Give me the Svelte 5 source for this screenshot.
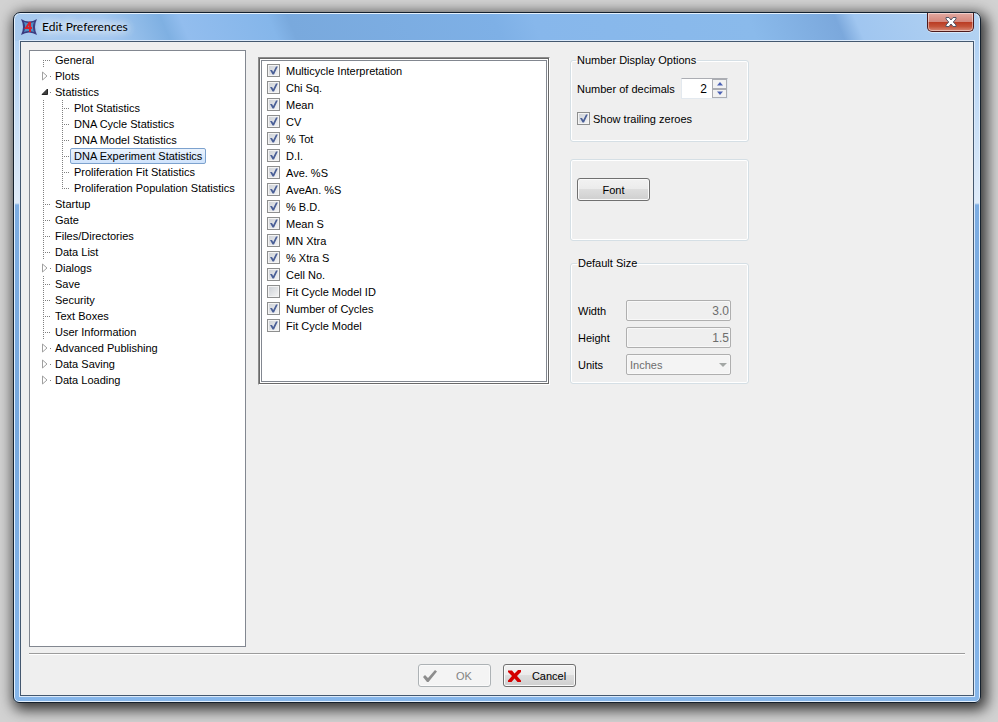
<script>
  let topics = $state([
    { name: 'General' },
    { name: 'Plots', children: [] },
    {
      name: 'Statistics',
      open: true,
      children: [
        'Plot Statistics',
        'DNA Cycle Statistics',
        'DNA Model Statistics',
        'DNA Experiment Statistics',
        'Proliferation Fit Statistics',
        'Proliferation Population Statistics'
      ]
    },
    { name: 'Startup' },
    { name: 'Gate' },
    { name: 'Files/Directories' },
    { name: 'Data List' },
    { name: 'Dialogs', children: [] },
    { name: 'Save' },
    { name: 'Security' },
    { name: 'Text Boxes' },
    { name: 'User Information' },
    { name: 'Advanced Publishing', children: [] },
    { name: 'Data Saving', children: [] },
    { name: 'Data Loading', children: [] }
  ]);

  let selected = $state('DNA Experiment Statistics');

  let statistics = $state([
    { name: 'Multicycle Interpretation', checked: true },
    { name: 'Chi Sq.', checked: true },
    { name: 'Mean', checked: true },
    { name: 'CV', checked: true },
    { name: '% Tot', checked: true },
    { name: 'D.I.', checked: true },
    { name: 'Ave. %S', checked: true },
    { name: 'AveAn. %S', checked: true },
    { name: '% B.D.', checked: true },
    { name: 'Mean S', checked: true },
    { name: 'MN Xtra', checked: true },
    { name: '% Xtra S', checked: true },
    { name: 'Cell No.', checked: true },
    { name: 'Fit Cycle Model ID', checked: false },
    { name: 'Number of Cycles', checked: true },
    { name: 'Fit Cycle Model', checked: true }
  ]);

  let decimals = $state(2);
  let trailingZeroes = $state({ name: 'Show trailing zeroes', checked: true });
</script>

{#snippet check(item)}
  <label class="check">
    <span class="box">
      <input type="checkbox" bind:checked={item.checked} />
      <svg viewBox="0 0 13 13" aria-hidden="true">
        <path d="M3 6 L5 6 L6.2 8 L9 2.5 L10.8 2.5 L7 10.5 L5.5 10.5 Z" fill="#4a5f97" />
      </svg>
    </span>
    {item.name}
  </label>
{/snippet}

<div class="desktop">
  <div class="window" role="dialog" aria-labelledby="window-title">
    <header class="titlebar">
      <svg class="app-icon" viewBox="0 0 16 16" aria-hidden="true">
        <path d="M0 0 Q8 5 16 0 Q12 8 16 16 Q8 11 0 16 Q4 8 0 0Z" fill="#3a3a80" />
        <path d="M3 3 Q8 5 13 3 Q11 8 13 13 Q8 11 3 13 Q5 8 3 3Z" fill="#4f8fc4" />
        <path d="M9 3 L5 9 H11 M9 3 V13" fill="none" stroke="#d8202a" stroke-width="2" />
      </svg>
      <h1 id="window-title">Edit Preferences</h1>
      <button class="close" aria-label="Close">
        <svg viewBox="0 0 12 10" aria-hidden="true">
          <path
            d="M1 .5 H4 L6 3 L8 .5 H11 V2 L8.3 5 L11 8 V9.5 H8 L6 7 L4 9.5 H1 V8 L3.7 5 L1 2Z"
            fill="#fff"
            stroke="#535666"
          />
        </svg>
      </button>
    </header>

    <main class="client">
      <div class="panes">
        <ul class="tree" role="tree">
          {#each topics as topic}
            <li role="none">
              <div class="row" class:leaf={!topic.children}>
                <span class="gutter">
                  {#if topic.children}
                    <button
                      class="expander"
                      aria-label="Toggle {topic.name}"
                      onclick={() => (topic.open = !topic.open)}
                    >
                      <svg viewBox="0 0 8 10" aria-hidden="true">
                        {#if topic.open}
                          <path d="M6.5 2 V7.5 H1 Z" fill="#404040" stroke="#262626" />
                        {:else}
                          <path d="M1.5 1 L6 5 L1.5 9 Z" fill="#fff" stroke="#a0a0a0" />
                        {/if}
                      </svg>
                    </button>
                  {/if}
                </span>
                <button
                  class="item"
                  class:selected={selected === topic.name}
                  role="treeitem"
                  aria-selected={selected === topic.name}
                  onclick={() => (selected = topic.name)}>{topic.name}</button
                >
              </div>
              {#if topic.open}
                <ul class="branch" role="group">
                  {#each topic.children as child}
                    <li class="row leaf" role="none">
                      <span class="gutter"></span>
                      <button
                        class="item"
                        class:selected={selected === child}
                        role="treeitem"
                        aria-selected={selected === child}
                        onclick={() => (selected = child)}>{child}</button
                      >
                    </li>
                  {/each}
                </ul>
              {/if}
            </li>
          {/each}
        </ul>

        <div class="list-frame">
          <div class="list">
            {#each statistics as item}
              {@render check(item)}
            {/each}
          </div>
        </div>

        <div class="options">
          <fieldset class="numbers">
            <legend>Number Display Options</legend>
            <div class="decimals">
              <label for="decimals">Number of decimals</label>
              <span class="spinner">
                <input id="decimals" type="text" bind:value={decimals} />
                <span class="arrows">
                  <button aria-label="Increase" onclick={() => decimals++}>
                    <svg viewBox="0 0 6 4" aria-hidden="true"><path d="M3 0 L6 3.5 H0Z" /></svg>
                  </button>
                  <button aria-label="Decrease" onclick={() => (decimals = Math.max(0, decimals - 1))}>
                    <svg viewBox="0 0 6 4" aria-hidden="true"><path d="M0 0.5 H6 L3 4Z" /></svg>
                  </button>
                </span>
              </span>
            </div>
            {@render check(trailingZeroes)}
          </fieldset>

          <fieldset class="font">
            <button class="push">Font</button>
          </fieldset>

          <fieldset class="size">
            <legend>Default Size</legend>
            <label for="width">Width</label>
            <input id="width" type="text" value="3.0" disabled />
            <label for="height">Height</label>
            <input id="height" type="text" value="1.5" disabled />
            <label for="units">Units</label>
            <span class="dropdown">
              <select id="units" disabled>
                <option>Inches</option>
              </select>
              <svg viewBox="0 0 8 4" aria-hidden="true"><path d="M0 0 H8 L4 4Z" fill="#a3a7a5" /></svg>
            </span>
          </fieldset>
        </div>
      </div>

      <footer class="actions">
        <button class="push" disabled>
          <svg viewBox="0 0 16 14" aria-hidden="true">
            <path d="M1 8 L3 6 L6 9 L13 1 L15 2.5 L6.5 13 H5 Z" fill="#8d8d8d" />
          </svg>
          <span>OK</span>
        </button>
        <button class="push">
          <svg viewBox="0 0 16 14" aria-hidden="true">
            <path d="M1 1.5 H5 L7.5 4.5 L11 1 H14 V3 L10 7 L14 11.5 V13 H10.5 L7.5 9.5 L4.5 13 H1 V11.5 L5 7 L1 3Z" fill="#d40000" />
          </svg>
          <span>Cancel</span>
        </button>
      </footer>
    </main>
  </div>
</div>

<style>
  :global(body) {
    margin: 0;
    background: #d2d2d2;
  }

  .desktop {
    box-sizing: border-box;
    display: flex;
    min-height: 100vh;
    padding: 12px 17px 19px 13px;
    font-family: 'Liberation Sans', Arial, sans-serif;
    font-size: 11px;
    line-height: 16px;
    color: #000;
  }

  button,
  input,
  select {
    box-sizing: border-box;
    margin: 0;
    font: inherit;
    color: inherit;
  }

  /* glass frame: slanted streaks across the title bar, pale upper sides, blue below */
  .window {
    box-sizing: border-box;
    flex: 1;
    display: flex;
    flex-direction: column;
    padding: 0 6px 6px;
    border: 1px solid #15212e;
    border-radius: 7px 7px 6px 6px;
    background:
      linear-gradient(
        67deg,
        #a9cbef,
        #a3c8f0 10%,
        #7fb0e2 16%,
        #92bdee 18%,
        #85b6ea 27%,
        #79a9dd 29%,
        #7eb0e6 50%,
        #87b7eb 54%,
        #8abaeb 76%,
        #7ba8dc 85%,
        #a0c6f0 87%,
        #b4d3f2
      ) 0 0 / 100% 28px no-repeat,
      linear-gradient(#a9cdf3, #dfebf8 190px, #7dade2 192px, #76a8de 60%, #86b6ea);
    box-shadow:
      inset 0 0 0 1px #e4f0fc,
      3px 4px 14px 3px rgba(0, 0, 0, 0.75);
  }

  .titlebar {
    display: flex;
    align-items: flex-start;
    height: 28px;
    padding-left: 1px;
  }

  .app-icon {
    width: 16px;
    height: 16px;
    margin-top: 6px;
  }

  h1 {
    flex: 1;
    margin: 5px 0 0 5px;
    font: 12px/18px Lato, 'Noto Sans', sans-serif;
    text-shadow: 0 0 8px #fff, 0 0 10px #fff, 0 0 12px #fff;
  }

  .close {
    display: flex;
    align-items: center;
    justify-content: center;
    width: 47px;
    height: 19px;
    padding: 0;
    border: 1px solid #4d1a1c;
    border-top: 0;
    border-radius: 0 0 5px 5px;
    background: linear-gradient(#e3aaa2, #d4877c 48%, #b93a22 50%, #c4543a 75%, #d98c7a);
    box-shadow: inset 0 0 0 1px rgba(255, 255, 255, 0.45), 0 1px 0 #d8e8f8;
  }

  .close svg {
    width: 12px;
    height: 10px;
  }

  .client {
    flex: 1;
    display: flex;
    flex-direction: column;
    padding: 8px 8px 0;
    border: 1px solid #44586f;
    outline: 1px solid #dceafa;
    background: #efefef;
  }

  .panes {
    flex: 1;
    display: flex;
    align-items: flex-start;
    padding-bottom: 6px;
    border-bottom: 1px solid #9c9c9c;
    box-shadow: 0 1px 0 #fff;
  }

  .tree {
    box-sizing: border-box;
    align-self: stretch;
    flex: 0 0 217px;
    margin: 0;
    padding: 1px 0 0;
    border: 1px solid #828790;
    background: #fff;
    list-style: none;
  }

  .row {
    display: flex;
    height: 16px;
  }

  /* dotted connectors: one vertical run and one stub towards the label */
  .gutter {
    flex: 0 0 21px;
    display: flex;
    align-items: center;
    padding-left: 11px;
    box-sizing: border-box;
    background: linear-gradient(#808080, #808080) 20px 8px / 1px 1px no-repeat;
  }

  .leaf .gutter {
    background:
      repeating-linear-gradient(#808080 0 1px, transparent 1px 2px) 13px 0 / 1px 16px no-repeat,
      repeating-linear-gradient(to right, #808080 0 1px, transparent 1px 2px) 13px 8px / 8px 1px no-repeat;
  }

  .tree > li:first-child .gutter {
    background-position: 13px 8px;
  }

  .branch {
    margin: 0;
    padding: 0 0 0 19px;
    list-style: none;
    background: repeating-linear-gradient(#808080 0 1px, transparent 1px 2px) 13px 0 / 1px 100% no-repeat;
  }

  .branch .row:last-child .gutter {
    background-size: 1px 9px, 8px 1px;
  }

  .expander {
    display: flex;
    padding: 0;
    border: 0;
    background: none;
  }

  .expander svg {
    width: 8px;
    height: 10px;
  }

  .item {
    padding: 0 3px;
    border: 1px solid transparent;
    border-radius: 2px;
    background: none;
    line-height: 14px;
    white-space: nowrap;
  }

  .item.selected {
    border-color: #7da2ce;
    background: linear-gradient(#ebf3fd, #cfe3fc);
  }

  .list-frame {
    flex: 0 0 288px;
    margin: 7px 20px 0 12px;
    border: 1px solid;
    border-color: #8c8c8c #fff #fff #8c8c8c;
    padding: 1px;
    background: #696969;
  }

  .list {
    min-height: 318px;
    padding: 2px 5px;
    border: 1px solid #fff;
    outline: 1px solid #828790;
    outline-offset: -2px;
    background: #fff;
  }

  .check {
    display: flex;
    align-items: center;
    gap: 6px;
    height: 17px;
  }

  .list .check {
    margin-left: 1px;
  }

  .box {
    display: grid;
  }

  .box input {
    grid-area: 1 / 1;
    width: 13px;
    height: 13px;
    appearance: none;
    border: 1px solid #8e8f8f;
    background: linear-gradient(135deg, #cbcfd5, #f6f6f6);
    box-shadow: inset 0 0 0 1px #f4f4f4;
  }

  .box svg {
    grid-area: 1 / 1;
    width: 13px;
    height: 13px;
    visibility: hidden;
    pointer-events: none;
  }

  .box input:checked + svg {
    visibility: visible;
  }

  .options {
    flex: 0 0 179px;
    margin-top: 2px;
  }

  fieldset {
    box-sizing: border-box;
    min-width: 0;
    margin: 0;
    padding: 0 6px;
    border: 1px solid #d5dfe5;
    border-radius: 3px;
    box-shadow: inset 0 0 0 1px #fff;
  }

  legend {
    padding: 0 1px;
    margin-left: -1px;
  }

  .numbers {
    height: 90px;
  }

  .decimals {
    display: flex;
    align-items: center;
    justify-content: space-between;
    margin: 10px 14px 11px 0;
  }

  .numbers .check {
    gap: 3px;
  }

  .spinner {
    display: flex;
    width: 47px;
    height: 21px;
    box-sizing: border-box;
    border: 1px solid #e3e9ef;
    border-top-color: #abadb3;
    background: #fff;
  }

  .spinner input {
    flex: 1;
    min-width: 0;
    padding: 0 5px 0 0;
    border: 0;
    background: none;
    font-size: 12px;
    text-align: right;
  }

  .arrows {
    display: flex;
    flex-direction: column;
  }

  .arrows button {
    flex: 1;
    display: flex;
    align-items: center;
    justify-content: center;
    width: 15px;
    padding: 0;
    border: 1px solid #abadb3;
    background: #f2f2f2;
  }

  .arrows svg {
    width: 6px;
    height: 4px;
    fill: #4c62b5;
  }

  .font {
    height: 82px;
    margin-top: 17px;
    padding-top: 18px;
  }

  .push {
    display: flex;
    align-items: center;
    justify-content: center;
    width: 73px;
    height: 23px;
    padding: 0;
    border: 1px solid #707070;
    border-radius: 3px;
    background: linear-gradient(#f2f2f2, #ebebeb 49%, #dddddd 50%, #cfcfcf);
    box-shadow: inset 0 0 0 1px #fafafa;
  }

  .push:disabled {
    border-color: #adb2b5;
    background: #f4f4f4;
    color: #838383;
  }

  .size {
    display: grid;
    grid-template-columns: 48px 105px;
    grid-auto-rows: 21px;
    gap: 6px 0;
    align-items: center;
    margin-top: 14px;
    padding: 29px 7px 8px;
  }

  .size input,
  .size select {
    width: 100%;
    height: 21px;
    padding: 0 2px;
    border: 1px solid #afafaf;
    border-radius: 2px;
    background: #efefef;
    box-shadow: inset 0 0 0 1px #f8f8f8;
    color: #6d6d6d;
    opacity: 1;
  }

  .size input {
    padding-right: 1px;
    font-size: 12px;
    text-align: right;
  }

  .dropdown {
    display: grid;
    align-items: center;
  }

  .size select {
    grid-area: 1 / 1;
    appearance: none;
    padding-left: 3px;
    background: #f4f4f4;
  }

  .dropdown svg {
    grid-area: 1 / 1;
    justify-self: end;
    width: 8px;
    height: 4px;
    margin-right: 4px;
    pointer-events: none;
  }

  .actions {
    display: flex;
    justify-content: center;
    gap: 12px;
    padding: 10px 0 8px;
  }

  .actions svg {
    width: 16px;
    height: 14px;
    margin-left: 3px;
  }

  .actions span {
    flex: 1;
    text-align: center;
  }
</style>
